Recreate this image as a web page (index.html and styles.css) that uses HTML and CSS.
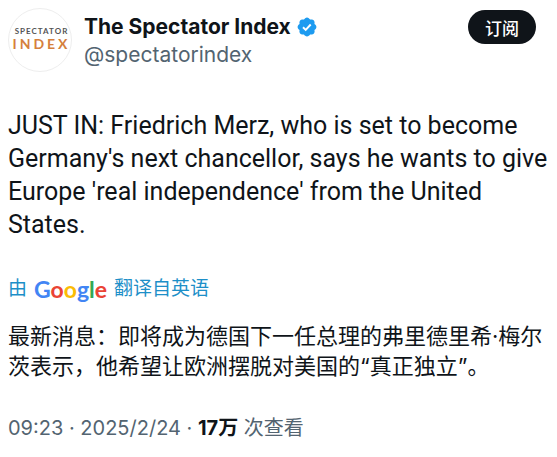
FILE: index.html
```html
<!DOCTYPE html>
<html lang="zh-CN">
<head>
  <meta charset="UTF-8">
  <meta name="viewport" content="width=device-width, initial-scale=1.0">
  <title>The Spectator Index</title>
  <link rel="stylesheet" href="styles.css">
</head>
<body>
  <article class="tweet">
    <header class="tweetHead">
      <div class="avatar">
        <span class="avatarTop">SPECTATOR</span>
        <span class="avatarBottom">INDEX</span>
      </div>
      <div class="user">
        <div class="userName">
          <span>The Spectator Index</span>
          <svg class="verified" viewBox="0 0 22 22" aria-hidden="true">
            <path fill="#1d9bf0" d="M20.396 11c-.018-.646-.215-1.275-.57-1.816-.354-.54-.852-.972-1.438-1.246.223-.607.27-1.264.14-1.897-.131-.634-.437-1.218-.882-1.687-.47-.445-1.053-.75-1.687-.882-.633-.13-1.29-.083-1.897.14-.273-.587-.704-1.086-1.245-1.44S11.647 1.62 11 1.604c-.646.017-1.273.213-1.813.568s-.969.854-1.24 1.44c-.608-.223-1.267-.272-1.902-.14-.635.13-1.22.436-1.69.882-.445.47-.749 1.055-.878 1.688-.13.633-.08 1.29.144 1.896-.587.274-1.087.705-1.443 1.245-.356.54-.555 1.17-.574 1.817.02.647.218 1.276.574 1.817.356.54.856.972 1.443 1.245-.224.606-.274 1.263-.144 1.896.13.634.433 1.218.877 1.688.47.443 1.054.747 1.687.878.633.132 1.29.084 1.897-.136.274.586.705 1.084 1.246 1.439.54.354 1.17.551 1.816.569.647-.016 1.276-.213 1.817-.567s.972-.854 1.245-1.44c.604.239 1.266.296 1.903.164.636-.132 1.22-.447 1.68-.907.46-.46.776-1.044.908-1.681s.075-1.299-.165-1.903c.586-.274 1.084-.705 1.439-1.246.354-.54.551-1.17.569-1.816z"/>
            <path fill="none" stroke="#fff" stroke-width="1.9" d="M7 11.3l2.7 2.6 5-5.4"/>
          </svg>
        </div>
        <div class="userId">@spectatorindex</div>
      </div>
      <button class="subscribe" type="button">订阅</button>
    </header>
    <p class="text" lang="en">JUST IN: Friedrich Merz, who is set to become Germany's next chancellor, says he wants to give Europe 'real independence' from the United States.</p>
    <a class="source" href="#">
      <span>由</span>
      <span class="google"><span class="blue">G</span><span class="red">o</span><span class="yellow">o</span><span class="blue">g</span><span class="green">l</span><span class="red">e</span></span>
      <span>翻译自英语</span>
    </a>
    <p class="translation">最新消息：即将成为德国下一任总理的弗里德里希·梅尔茨表示，他希望让欧洲摆脱对美国的“真正独立”。</p>
    <footer class="info">09:23 · 2025/2/24 · <b>17万</b> 次查看</footer>
  </article>
</body>
</html>
```
FILE: styles.css
```css
body{
  margin: 0;
  background-color: #fff;
  color: #0f1419;
  font-family: Inter, "Noto Sans CJK SC", sans-serif;
}
.tweet{
  padding: 8px 8px 16px;
}
.tweetHead{
  display: flex;
  align-items: flex-start;
}
.avatar{
  box-sizing: border-box;
  width: 64px;
  height: 64px;
  padding: 0 0 2px 3px;
  border: 1px solid #eee;
  border-radius: 50%;
  display: flex;
  flex-direction: column;
  align-items: center;
  justify-content: center;
  font-family: Lato, sans-serif;
  white-space: nowrap;
}
.avatarTop{
  color: #555;
  font-size: 8px;
  font-weight: 700;
  line-height: 10px;
  letter-spacing: 1px;
}
.avatarBottom{
  color: #d5803c;
  font-size: 14px;
  font-weight: 700;
  line-height: 16px;
  letter-spacing: 3px;
}
.user{
  flex: 1;
  margin-left: 12px;
  font-size: 21px;
  line-height: 28px;
  padding-top: 5px;
}
.userName{
  display: flex;
  align-items: center;
  gap: 5px;
  font-weight: 700;
}
.verified{
  width: 22px;
  height: 22px;
}
.userId{
  color: #536471;
}
.subscribe{
  margin: 2px 13px 0 0;
  padding: 0 17px;
  height: 34px;
  border: 0;
  border-radius: 17px;
  background-color: #0f1419;
  color: #fff;
  font-family: inherit;
  font-size: 17px;
  font-weight: 500;
  cursor: pointer;
}
.text{
  margin: 37px 0 0;
  font-family: Roboto, sans-serif;
  font-size: 25px;
  line-height: 33px;
}
.source{
  display: flex;
  align-items: center;
  gap: 7px;
  margin-top: 33px;
  color: #1d8fc8;
  font-size: 19px;
  line-height: 30px;
  text-decoration: none;
}
.google{
  font-family: Lato, sans-serif;
  font-size: 23px;
  font-weight: 700;
}
.blue{
  color: #4285f4;
}
.red{
  color: #ea4335;
}
.yellow{
  color: #fbbc05;
}
.green{
  color: #34a853;
}
.translation{
  margin: 17px 0 0;
  font-size: 22px;
  line-height: 30px;
}
.info{
  margin-top: 31px;
  color: #536471;
  font-size: 20px;
  line-height: 32px;
}
.info b{
  color: #0f1419;
}
```
